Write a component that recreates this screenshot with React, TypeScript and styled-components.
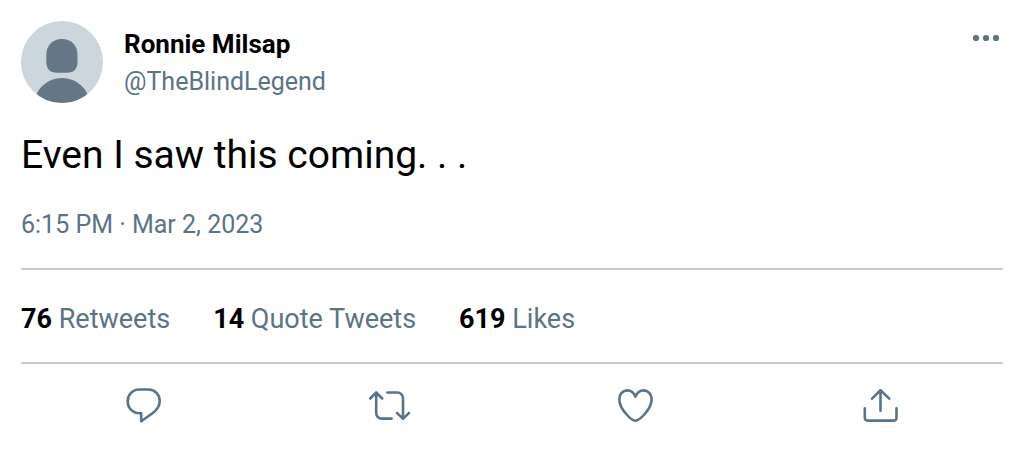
import React from "react";
import styled, { createGlobalStyle } from "styled-components";

const GlobalStyle = createGlobalStyle`
  body {
    margin: 0;
    background: #fff;
    color: #000;
    font-family: Roboto, "Liberation Sans", sans-serif;
  }
`;

const Card = styled.article`
  padding: 21px;
`;

const Header = styled.header`
  display: flex;
  gap: 21px;
`;

const Avatar = styled.svg`
  flex: none;
  width: 82px;
  height: 82px;
`;

const Author = styled.div`
  flex: 1;
  display: flex;
  flex-direction: column;
  align-items: flex-start;
  padding-top: 4px;
`;

const Name = styled.a`
  color: #000;
  font-size: 26px;
  font-weight: 700;
  line-height: 38px;
  text-decoration: none;
`;

const Handle = styled.a`
  color: #5b7388;
  font-size: 25px;
  line-height: 38px;
  text-decoration: none;
`;

const IconButton = styled.button`
  display: flex;
  align-self: flex-start;
  margin: 0;
  padding: 0;
  border: 0;
  background: none;
  color: #5b7388;
  cursor: pointer;
`;

const Icon = styled.svg`
  fill: none;
  stroke: currentColor;
  stroke-width: 2.6;
  stroke-linecap: round;
  stroke-linejoin: round;
`;

const Message = styled.p`
  margin: 26px 0 0;
  font-size: 39px;
  line-height: 52px;
`;

const Posted = styled.time`
  display: block;
  margin: 27px 0 26px;
  color: #5b7388;
  font-size: 25px;
  line-height: 34px;
`;

const Stats = styled.div`
  display: flex;
  flex-wrap: wrap;
  gap: 0 43px;
  padding: 32px 0 26px;
  border: solid #c4cfd6;
  border-width: 2px 0;
`;

const Stat = styled.a`
  color: #5b7388;
  font-size: 27px;
  line-height: 34px;
  text-decoration: none;

  strong {
    color: #000;
    font-weight: 700;
  }
`;

const Actions = styled.div`
  display: grid;
  grid-template-columns: repeat(4, 1fr);
  justify-items: center;
  padding-top: 20px;
`;

const stats = [
  { count: 76, label: "Retweets" },
  { count: 14, label: "Quote Tweets" },
  { count: 619, label: "Likes" },
];

const actions = [
  {
    label: "Reply",
    path: "M17 5.5H26.5C33 5.5 37.7 10.6 37.7 17C37.7 22 35 26 30.5 29.2L19.2 37.3V29.3H18C11 29.3 5.7 24 5.7 17.4C5.7 10.8 10.6 5.5 17 5.5Z",
  },
  {
    label: "Retweet",
    path: "M3.2 14.5L9.2 8.5L15.2 14.5M9.2 8.8V29A5.6 5.6 0 0 0 14.8 34.6H24.6M20.4 8.5H30.4A5.6 5.6 0 0 1 36 14.1V34.8M30 28.8L36 34.8L42 28.8",
  },
  {
    label: "Like",
    path: "M22.4 12.6C20.7 8.8 17.8 6.4 14.6 6.4C9.7 6.4 6.3 10.3 6.3 15.2C6.3 25.3 18.6 36.7 22.4 36.7C26.2 36.7 38.6 25.3 38.6 15.2C38.6 10.3 35.2 6.4 30.3 6.4C27.1 6.4 24.2 8.8 22.4 12.6Z",
  },
  {
    label: "Share",
    path: "M22.5 26.7V6.3M14 14.6L22.5 6.3L31.3 14.6M6.8 24.3V33.8A2.8 2.8 0 0 0 9.6 36.6H35.7A2.8 2.8 0 0 0 38.5 33.8V24.3",
  },
];

export default function App() {
  return (
    <>
      <GlobalStyle />
      <Card>
        <Header>
          <Avatar viewBox="0 0 82 82" aria-hidden="true">
            <defs>
              <clipPath id="avatar-circle">
                <circle cx="41" cy="41" r="41" />
              </clipPath>
            </defs>
            <g clipPath="url(#avatar-circle)">
              <rect width="82" height="82" fill="#ccd6dd" />
              <path
                d="M41 18C50.5 18 56.5 24.5 56.5 34V40.5C56.5 48 53 51.8 46 51.8H36C29 51.8 25.3 48 25.3 40.5V34C25.3 24.5 31.5 18 41 18Z"
                fill="#657786"
              />
              <ellipse cx="41" cy="84" rx="28" ry="27" fill="#657786" />
            </g>
          </Avatar>
          <Author>
            <Name href="#profile">Ronnie Milsap</Name>
            <Handle href="#profile">@TheBlindLegend</Handle>
          </Author>
          <IconButton type="button" aria-label="More">
            <svg width="34" height="34" viewBox="0 0 34 34" fill="currentColor" aria-hidden="true">
              <circle cx="7" cy="17" r="3.1" />
              <circle cx="17" cy="17" r="3.1" />
              <circle cx="27" cy="17" r="3.1" />
            </svg>
          </IconButton>
        </Header>
        <Message>Even I saw this coming. . .</Message>
        <Posted dateTime="2023-03-02T18:15">6:15 PM · Mar 2, 2023</Posted>
        <Stats>
          {stats.map(({ count, label }) => (
            <Stat key={label} href="#activity">
              <strong>{count}</strong> {label}
            </Stat>
          ))}
        </Stats>
        <Actions>
          {actions.map(({ label, path }) => (
            <IconButton key={label} type="button" aria-label={label}>
              <Icon width="44" height="44" viewBox="0 0 44 44" aria-hidden="true">
                <path d={path} />
              </Icon>
            </IconButton>
          ))}
        </Actions>
      </Card>
    </>
  );
}
